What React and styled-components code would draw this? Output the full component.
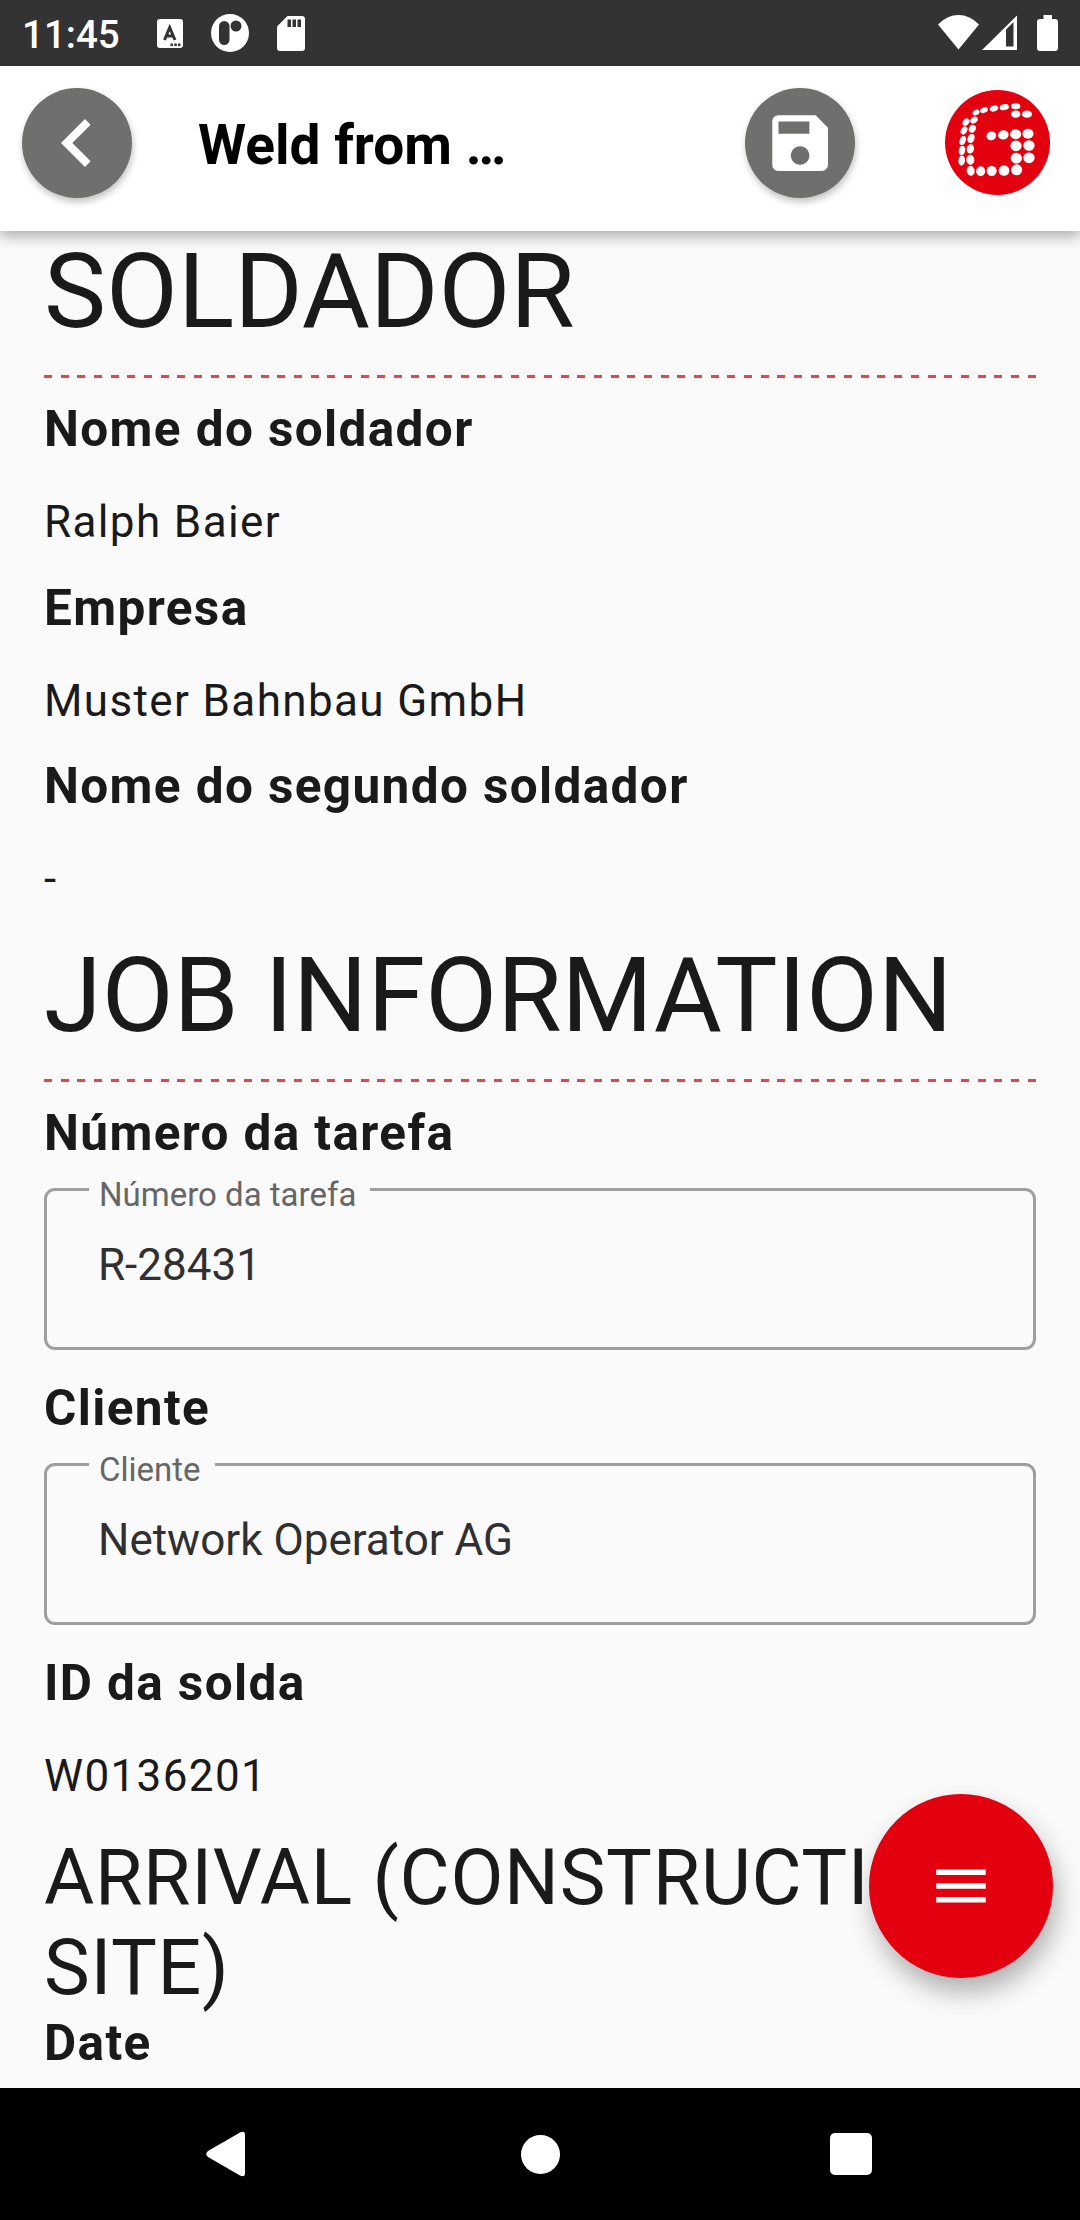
import React from 'react';

import styled, { createGlobalStyle } from 'styled-components';

const GlobalStyle = createGlobalStyle`
  * {
    box-sizing: border-box;
  }
  body {
    margin: 0;
    font-family: Roboto, 'Liberation Sans', sans-serif;
  }
`;

const StyledScreenDiv = styled.div`
  display: flex;
  flex-direction: column;
  position: relative;
  width: 1080px;
  height: 2220px;
  overflow: hidden;
  background-color: #fafafa;
  color: #1a1a1a;
`;

const StyledStatusBar = styled.div`
  display: flex;
  flex: none;
  align-items: center;
  justify-content: space-between;
  height: 66px;
  padding: 0 22px;
  background-color: #333;
  color: #fff;
`;

const StyledStatusGroup = styled.div`
  display: flex;
  align-items: center;
  gap: ${p => p.gap || 0}px;
`;

const StyledTimeSpan = styled.span`
  width: 99px;
  margin-right: 36px;
  padding-top: 4px;
  font-size: 38.5px;
  font-weight: 500;
  line-height: 46px;
`;

const StyledHeader = styled.header`
  display: flex;
  flex: none;
  align-items: flex-start;
  height: 165px;
  padding: 22px 30px 0 22px;
  background-color: #fff;
  box-shadow: 0 5px 14px rgba(0, 0, 0, 0.33);
  z-index: 1;
`;

const StyledRoundButton = styled.button`
  display: flex;
  flex: none;
  align-items: center;
  justify-content: center;
  width: 110px;
  height: 110px;
  padding: 0;
  border: 0;
  border-radius: 50%;
  background-color: #6f6f6e;
  box-shadow: 1px 4px 7px rgba(0, 0, 0, 0.24);
`;

const StyledTitle = styled.h1`
  flex: 1;
  margin: 0 0 0 66px;
  color: #000;
  font-size: 55px;
  font-weight: 700;
  line-height: 114px;
`;

const StyledLogo = styled.svg`
  width: 105px;
  height: 105px;
  margin: 2px 0 0 90px;
`;

const StyledMain = styled.main`
  flex: 1;
  min-height: 0;
  padding: 0 44px;
`;

const StyledSectionTitle = styled.h2`
  margin: ${p => p.top || 0}px 0 22px;
  font-size: 104.5px;
  font-weight: 400;
  line-height: 122px;
`;

const StyledSubTitle = styled.h3`
  margin: 31px 0 1px;
  font-size: 77px;
  font-weight: 400;
  line-height: 90px;
  letter-spacing: 0.6875px;
`;

const StyledDivider = styled.div`
  height: 3px;
  margin-bottom: 22px;
  background: repeating-linear-gradient(90deg, #e9414d 0 8px, transparent 8px 16.67px);
`;

const StyledLabel = styled.div`
  margin-top: ${p => p.top || 0}px;
  font-size: 49.5px;
  font-weight: 700;
  line-height: 58px;
  letter-spacing: 1.375px;
`;

const StyledValue = styled.div`
  margin-top: 38px;
  font-size: 44px;
  line-height: 52px;
  letter-spacing: 1.375px;
`;

const StyledFieldset = styled.fieldset`
  min-width: 0;
  height: 185px;
  margin: 3px 0 0;
  padding: 25px 52px 0 42px;
  border: 3px solid #9e9e9e;
  border-radius: 11px;
`;

const StyledLegend = styled.legend`
  height: 49px;
  padding: 11px 14px 0 10px;
  color: #666;
  font-size: 33px;
  line-height: 38px;
`;

const StyledFieldValue = styled.div`
  padding-left: 9px;
  color: #303030;
  font-size: 44px;
  line-height: 52px;
`;

const StyledFab = styled.button`
  display: flex;
  align-items: center;
  justify-content: center;
  position: absolute;
  right: 27px;
  bottom: 242px;
  width: 184px;
  height: 184px;
  padding: 0;
  border: 0;
  border-radius: 50%;
  background-color: #e3000f;
  box-shadow: 4px 14px 26px rgba(0, 0, 0, 0.3);
  z-index: 1;
`;

const StyledNavBar = styled.nav`
  display: flex;
  flex: none;
  align-items: center;
  justify-content: space-between;
  height: 132px;
  padding: 0 208px 0 206px;
  background-color: #000;
`;

const StyledHomeIcon = styled.svg`
  margin-left: 6px;
`;

// cx, cy, rx, ry, rotation
const LOGO_DOTS = [
  [138, 99, 11, 8, -30],
  [162, 92, 12, 8, -25],
  [192, 87, 13, 8.5, -18],
  [223, 83, 14, 9, -12],
  [257, 80, 14, 9, 0],
  [257, 104, 14, 11, 0],
  [291, 104, 15, 11, 0],
  [132, 122, 12, 9, -35],
  [108, 128, 12, 9, -50],
  [127, 148, 10, 12, 30],
  [102, 153, 9, 13, 30],
  [123, 177, 10, 14, 20],
  [98, 183, 9, 14, 20],
  [121, 208, 11, 14, 10],
  [96, 213, 9.5, 14, 10],
  [121, 241, 12, 15, -5],
  [95, 243, 10, 15, 5],
  [122, 274, 12, 15, -10],
  [152, 275, 13.5, 15, 0],
  [185, 274, 15, 15.5, 0],
  [222, 273, 16, 16, 0],
  [260, 271, 16.5, 16.5, 0],
  [184, 169, 15, 13, -20],
  [220, 166, 16, 14, -10],
  [257, 164, 16.5, 15, 0],
  [294, 163, 16.5, 15, 0],
  [258, 199, 17, 16, 0],
  [297, 198, 17, 15.5, 0],
  [259, 236, 17, 16, 0],
  [297, 235, 17, 16, 0],
];

const Logo = () => (
  <StyledLogo viewBox="45 31.5 315 315">
    <circle cx="202.5" cy="189" r="157.5" fill="#e3000f" />
    {LOGO_DOTS.map(([cx, cy, rx, ry, rotation]) => (
      <ellipse
        key={`${cx}-${cy}`}
        cx={cx}
        cy={cy}
        rx={rx}
        ry={ry}
        fill="#fff"
        transform={`rotate(${rotation} ${cx} ${cy})`}
      />
    ))}
  </StyledLogo>
);

const StatusBar = () => (
  <StyledStatusBar>
    <StyledStatusGroup>
      <StyledTimeSpan>11:45</StyledTimeSpan>
      <StyledStatusGroup gap={28}>
        <svg width="26" height="29" viewBox="0 0 26 29">
          <rect width="26" height="29" rx="3" fill="#fff" />
          <path d="M7.5 21L12.700 8.500L18 21M9.500 17h7" fill="none" stroke="#333" strokeWidth="3" />
          <path d="M13.500 24.500h2.500v2.500h-2.500zM17.300 24.500h2.500v2.500h-2.500zM21 24.500h2.500v2.500h-2.500z" fill="#333" />
        </svg>
        <svg width="38" height="38" viewBox="0 0 38 38">
          <circle cx="19" cy="19" r="19" fill="#fff" />
          <rect x="8" y="7" width="10.500" height="24" rx="5.250" fill="#333" />
          <circle cx="25" cy="12" r="5.500" fill="#333" />
        </svg>
        <svg width="28" height="35" viewBox="0 0 28 35">
          <path d="M10.500 0H25a3 3 0 0 1 3 3V32a3 3 0 0 1-3 3H3a3 3 0 0 1-3-3V10.500z" fill="#fff" />
          <path d="M10.500 3.500h3.500v7.500h-3.500zM15.500 3.500h3.500v7.500h-3.500zM20.500 3.500h3.500v7.500h-3.500z" fill="#333" />
        </svg>
      </StyledStatusGroup>
    </StyledStatusGroup>
    <StyledStatusGroup>
      <svg width="120" height="36" viewBox="938 15 120 36">
        <path d="M938 24.500Q947 15 958.500 15T979 24.500L958.500 49.500z" fill="#fff" />
        <path d="M982 50L1017 15.500V50zM1006 29.500V46.500H1013.500V22z" fill="#fff" fillRule="evenodd" />
        <path
          d="M1043.500 15h8.500v4h3a3 3 0 0 1 3 3v26a3 3 0 0 1-3 3h-15a3 3 0 0 1-3-3V22a3 3 0 0 1 3-3h3.500z"
          fill="#fff"
        />
      </svg>
    </StyledStatusGroup>
  </StyledStatusBar>
);

const Header = () => (
  <StyledHeader>
    <StyledRoundButton aria-label="Back">
      <svg width="96" height="96" viewBox="0 0 24 24" fill="#fff">
        <path d="M15.41 7.41L14 6l-6 6 6 6 1.410-1.410L10.830 12z" />
      </svg>
    </StyledRoundButton>
    <StyledTitle>Weld from …</StyledTitle>
    <StyledRoundButton aria-label="Save">
      <svg width="74.250" height="74.250" viewBox="0 0 24 24" fill="#fff">
        <path d="M17 3H5c-1.110 0-2 .9-2 2v14c0 1.100.89 2 2 2h14c1.100 0 2-.9 2-2V7l-4-4zm-5 16c-1.660 0-3-1.340-3-3s1.340-3 3-3 3 1.340 3 3-1.340 3-3 3zm3-10H5V5h10v4z" />
      </svg>
    </StyledRoundButton>
    <Logo />
  </StyledHeader>
);

const TextRow = ({ label, value, top }) => (
  <>
    <StyledLabel top={top}>{label}</StyledLabel>
    <StyledValue>{value}</StyledValue>
  </>
);

const FieldRow = ({ label, value, top }) => (
  <>
    <StyledLabel top={top}>{label}</StyledLabel>
    <StyledFieldset>
      <StyledLegend>{label}</StyledLegend>
      <StyledFieldValue>{value}</StyledFieldValue>
    </StyledFieldset>
  </>
);

const App = () => (
  <StyledScreenDiv>
    <GlobalStyle />
    <StatusBar />
    <Header />
    <StyledMain>
      <StyledSectionTitle>SOLDADOR</StyledSectionTitle>
      <StyledDivider />
      <TextRow label="Nome do soldador" value="Ralph Baier" />
      <TextRow label="Empresa" value="Muster Bahnbau GmbH" top={30.5} />
      <TextRow label="Nome do segundo soldador" value="-" top={30.5} />
      <StyledSectionTitle top={30}>JOB INFORMATION</StyledSectionTitle>
      <StyledDivider />
      <FieldRow label="Número da tarefa" value="R-28431" />
      <FieldRow label="Cliente" value="Network Operator AG" top={29} />
      <TextRow label="ID da solda" value="W0136201" top={29} />
      <StyledSubTitle>ARRIVAL (CONSTRUCTION SITE)</StyledSubTitle>
      <StyledLabel>Date</StyledLabel>
    </StyledMain>
    <StyledFab aria-label="Menu">
      <svg width="66" height="66" viewBox="0 0 24 24" fill="#fff">
        <path d="M3 18h18v-2H3v2zm0-5h18v-2H3v2zm0-7v2h18V6H3z" />
      </svg>
    </StyledFab>
    <StyledNavBar>
      <svg width="39" height="46" viewBox="0 0 39 46">
        <path d="M2 20L34 1.500Q39 -1 39 4V42Q39 47 34 44.500L2 26Q-1.500 23 2 20z" fill="#fff" />
      </svg>
      <StyledHomeIcon width="39" height="39" viewBox="0 0 39 39">
        <circle cx="19.500" cy="19.500" r="19.500" fill="#fff" />
      </StyledHomeIcon>
      <svg width="42" height="42" viewBox="0 0 42 42">
        <rect width="42" height="42" rx="5" fill="#fff" />
      </svg>
    </StyledNavBar>
  </StyledScreenDiv>
);

export default App;
